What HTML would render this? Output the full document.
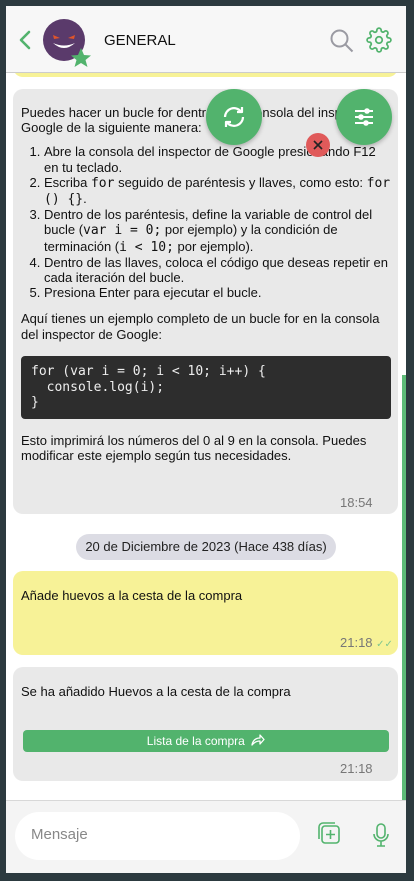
<!DOCTYPE html>
<html><head><meta charset="utf-8"><style>
*{margin:0;padding:0;box-sizing:border-box}
body{width:414px;height:881px;background:#2c3a3f;font-family:"Liberation Sans",sans-serif;position:relative;overflow:hidden;color:#111}
.a{position:absolute}
.frame{left:6px;top:6px;width:400px;height:867px;background:#fff;overflow:hidden}
.hdr{left:0;top:0;width:400px;height:67px;background:#f7f7f7;border-bottom:1px solid #ccc}
.bub{background:#e9e9e9;border-radius:10px}
.t{font-size:13px;line-height:15.2px}
code,.mono{font-family:"DejaVu Sans Mono","Liberation Mono",monospace;font-size:13px}
ol{padding-left:23px}
.time{font-size:13px;color:#777}
</style></head><body>
<div class="a frame">
 <div class="a" style="left:7px;top:60px;width:385px;height:11px;background:#f7f297;border-radius:0 0 10px 10px"></div>
 <div class="a bub" style="left:7px;top:83px;width:385px;height:425px"></div>
 <div class="a t" style="left:15px;top:99px;width:370px">
  <p>Puedes hacer un bucle for dentro de la consola del inspector de Google de la siguiente manera:</p>
  <ol style="margin-top:9px">
   <li>Abre la consola del inspector de Google presionando F12 en tu teclado.</li>
   <li>Escriba <code>for</code> seguido de paréntesis y llaves, como esto: <code>for () {}</code>.</li>
   <li>Dentro de los paréntesis, define la variable de control del bucle (<code>var i = 0;</code> por ejemplo) y la condición de terminación (<code>i &lt; 10;</code> por ejemplo).</li>
   <li>Dentro de las llaves, coloca el código que deseas repetir en cada iteración del bucle.</li>
   <li>Presiona Enter para ejecutar el bucle.</li>
  </ol>
  <p style="margin-top:11px">Aquí tienes un ejemplo completo de un bucle for en la consola del inspector de Google:</p>
 </div>
 <div class="a mono" style="left:15px;top:350px;width:370px;height:63px;background:#2d2d2d;border-radius:4px;color:#eee;padding:8px 10px;line-height:15.5px;white-space:pre">for (var i = 0; i &lt; 10; i++) {
  console.log(i);
}</div>
 <div class="a t" style="left:15px;top:427px;width:370px">Esto imprimirá los números del 0 al 9 en la consola. Puedes modificar este ejemplo según tus necesidades.</div>
 <div class="a time" style="left:334px;top:489px">18:54</div>

 <div class="a" style="left:70px;top:528px;width:260px;height:26px;background:#dcdce4;border-radius:13px;font-size:13px;text-align:center;line-height:26px;color:#222">20 de Diciembre de 2023 (Hace 438 días)</div>

 <div class="a" style="left:7px;top:565px;width:385px;height:84px;background:#f7f297;border-radius:10px"></div>
 <div class="a t" style="left:15px;top:582px">Añade huevos a la cesta de la compra</div>
 <div class="a time" style="left:334px;top:629px">21:18 <span style="color:#7fc68f;font-size:10px">✓✓</span></div>

 <div class="a bub" style="left:7px;top:661px;width:385px;height:114px"></div>
 <div class="a t" style="left:15px;top:678px">Se ha añadido Huevos a la cesta de la compra</div>
 <div class="a" style="left:17px;top:724px;width:366px;height:22px;background:#52b36d;border-radius:4px;color:#fff;font-size:12px;text-align:center;line-height:22px">Lista de la compra <svg width="14" height="12" viewBox="0 0 14 12" style="vertical-align:-1px;margin-left:3px"><path d="M1 11C2 6 5 4 9 4V1l4 4.5L9 10V7C5.5 7 3 8.5 1 11z" fill="none" stroke="#fff" stroke-width="1.3" stroke-linejoin="round"/></svg></div>
 <div class="a time" style="left:334px;top:755px">21:18</div>

 <div class="a" style="left:396px;top:369px;width:4px;height:425px;background:#5dbb78"></div>

 <div class="a" style="left:0;top:794px;width:400px;height:73px;background:#f4f4f4;border-top:1px solid #d8d8d8"></div>
 <div class="a" style="left:9px;top:806px;width:285px;height:48px;background:#fff;border-radius:24px;font-size:15px;color:#888;padding:14px 0 0 16px">Mensaje</div>
 <svg class="a" style="left:310px;top:815px" width="26" height="26" viewBox="0 0 26 26" fill="none" stroke="#52b36d" stroke-width="1.6"><rect x="6" y="5" width="17" height="17" rx="3"/><path d="M3 18V6a4 4 0 0 1 4-4h12"/><path d="M14.5 9v9M10 13.5h9"/></svg>
 <svg class="a" style="left:365px;top:816px" width="20" height="26" viewBox="0 0 20 26" fill="none" stroke="#52b36d" stroke-width="1.6"><rect x="6" y="2" width="8" height="14" rx="4"/><path d="M3 12a7 7 0 0 0 14 0M10 19v5M6 24h8"/></svg>

 <div class="a hdr"></div>
 <svg class="a" style="left:12px;top:24px" width="14" height="20" viewBox="0 0 14 20"><path d="M11 2L3 10l8 8" fill="none" stroke="#52b36d" stroke-width="2.6" stroke-linecap="round" stroke-linejoin="round"/></svg>
 <svg class="a" style="left:36px;top:12px" width="56" height="56" viewBox="0 0 56 56"><circle cx="22" cy="22" r="21" fill="#5a3a6b"/><path d="M11 17l7 3-6 1zM33 17l-7 3 6 1z" fill="#e0552a"/><path d="M11 25q11 10 22 0q-11 5-22 0z" fill="#fff"/><path d="M39 30l3 7 7 .5-5.5 4.5 2 7L39 45l-6.5 4 2-7L29 37.5l7-.5z" fill="#52b36d"/></svg>
 <div class="a" style="left:98px;top:26px;font-size:15px;color:#111">GENERAL</div>
 <svg class="a" style="left:323px;top:22px" width="26" height="26" viewBox="0 0 26 26" fill="none" stroke="#9a9aa2" stroke-width="2"><circle cx="10.5" cy="10.5" r="8"/><path d="M16.5 16.5l7 7"/></svg>
 <svg class="a" style="left:360px;top:21px" width="26" height="26" viewBox="0 0 24 24" fill="none" stroke="#52b36d" stroke-width="1.6"><circle cx="12" cy="12" r="3"/><path d="M19.4 15a1.65 1.65 0 0 0 .33 1.820l.06.06a2 2 0 1 1-2.83 2.83l-.06-.06a1.65 1.65 0 0 0-1.82-.33 1.65 1.65 0 0 0-1 1.51V21a2 2 0 1 1-4 0v-.09A1.650 1.65 0 0 0 9 19.4a1.65 1.65 0 0 0-1.82.33l-.06.06a2 2 0 1 1-2.830-2.83l.06-.06A1.65 1.65 0 0 0 4.68 15a1.65 1.65 0 0 0-1.51-1H3a2 2 0 1 1 0-4h.09A1.65 1.65 0 0 0 4.6 9a1.65 1.65 0 0 0-.33-1.82l-.06-.06a2 2 0 1 1 2.83-2.83l.06.06A1.65 1.65 0 0 0 9 4.68a1.65 1.65 0 0 0 1-1.51V3a2 2 0 1 1 4 0v.09a1.65 1.65 0 0 0 1 1.51 1.65 1.65 0 0 0 1.82-.33l.06-.06a2 2 0 1 1 2.83 2.83l-.06.06A1.65 1.65 0 0 0 19.4 9a1.65 1.65 0 0 0 1.51 1H21a2 2 0 1 1 0 4h-.09a1.65 1.65 0 0 0-1.51 1z"/></svg>

 <div class="a" style="left:200px;top:83px;width:56px;height:56px;border-radius:50%;background:#52b36d;box-shadow:0 2px 4px rgba(0,0,0,.25)"></div>
 <svg class="a" style="left:214px;top:97px" width="28" height="28" viewBox="0 0 28 28" fill="none" stroke="#fff" stroke-width="2.2"><path d="M5 14a9 9 0 0 1 16-5.5"/><path d="M23 14a9 9 0 0 1-16 5.5"/><path d="M22 4v5h-5M6 24v-5h5" stroke-linejoin="round"/></svg>
 <div class="a" style="left:330px;top:83px;width:56px;height:56px;border-radius:50%;background:#52b36d;box-shadow:0 2px 4px rgba(0,0,0,.25)"></div>
 <svg class="a" style="left:346px;top:99px" width="24" height="24" viewBox="0 0 24 24" stroke="#fff" stroke-width="2"><path d="M3 6h18M3 12h18M3 18h18"/><circle cx="15" cy="6" r="1.8" fill="#fff"/><circle cx="9" cy="12" r="1.8" fill="#fff"/><circle cx="14" cy="18" r="1.8" fill="#fff"/></svg>
 <div class="a" style="left:300px;top:127px;width:24px;height:24px;border-radius:50%;background:#e05a5a"></div>
 <svg class="a" style="left:306px;top:133px" width="12" height="12" viewBox="0 0 12 12" stroke="#222" stroke-width="1.6"><path d="M2 2l8 8M10 2l-8 8"/></svg>
</div>
</body></html>
